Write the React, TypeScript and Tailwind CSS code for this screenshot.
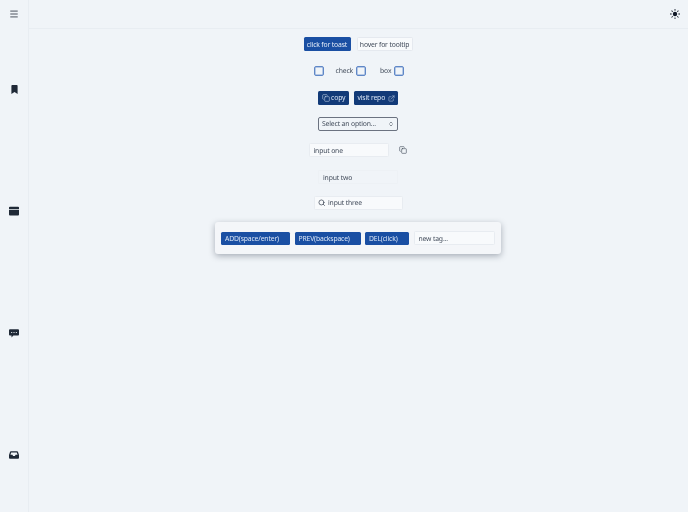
import { Menu, Copy, ExternalLink, Search, ChevronsUpDown } from 'lucide-react';

function Checkbox() {
  return <span className="block w-[8px] h-[8px] box-content border border-[#5f87c7] shadow-[inset_0_0_0_0.5px_#7d9ed4] rounded-[2px] bg-[#f0f4f8]" />;
}

function TagButton({ label, width }: { label: string; width: string }) {
  return (
    <button className={`h-[13px] box-content py-0 ${width} bg-[#1a4fa3] text-[#dbe6f6] leading-[13px] text-left pl-[4px] rounded-[1.5px]`}>
      {label}
    </button>
  );
}

function App() {
  return (
    <div className="w-[688px] h-[512px] overflow-hidden flex bg-[#f0f4f8] text-[#414b5a] text-[6.8px] tracking-[-0.15px] font-['Noto_Sans',sans-serif] [text-rendering:geometricPrecision] blur-[0.35px]">
      <aside className="w-[28px] box-content shrink-0 h-[512px] border-r border-[#e8edf2] flex flex-col">
        <div className="h-[28px] shrink-0 flex items-center justify-center">
          <Menu size={10} strokeWidth={1.75} className="text-[#111827]" />
        </div>
        <nav className="h-[488px] shrink-0 grid grid-rows-4 place-items-center text-[#1f2937]">
          <svg viewBox="0 0 16 16" className="w-[9px] h-[9px]" fill="currentColor">
            <path d="M2.5 1.5A1.5 1.5 0 0 1 4 0h8a1.5 1.5 0 0 1 1.5 1.5V16L8 12.5 2.5 16z" />
          </svg>
          <svg viewBox="0 0 16 16" className="w-[10px] h-[10px]" fill="currentColor">
            <path d="M1.500 1h13A1.500 1.500 0 0 1 16 2.500V5H0V2.500A1.500 1.500 0 0 1 1.500 1zM0 6.200h16v7.300a1.500 1.500 0 0 1-1.500 1.500h-13A1.500 1.500 0 0 1 0 13.500z" />
          </svg>
          <svg viewBox="0 0 16 16" className="w-[10px] h-[10px]" fill="currentColor">
            <path d="M1.5 2h13A1.5 1.5 0 0 1 16 3.5v7a1.5 1.5 0 0 1-1.5 1.5H7l-3 3v-3H1.5A1.5 1.5 0 0 1 0 10.500v-7A1.5 1.5 0 0 1 1.500 2z" />
            <path d="M3.500 6.200h1.600v1.600H3.500zM7.200 6.200h1.600v1.600H7.200zM10.900 6.200h1.600v1.600h-1.600z" fill="#f0f4f8" />
          </svg>
          <svg viewBox="0 0 16 16" className="w-[10px] h-[10px]" fill="currentColor">
            <path fillRule="evenodd" d="M3 2h10a1.500 1.500 0 0 1 1.400 1L16 8v4.500a1.500 1.500 0 0 1-1.500 1.500h-13A1.500 1.500 0 0 1 0 12.500V8l1.600-5A1.500 1.500 0 0 1 3 2zM2.300 7.500h3.200l1 2h3l1-2h3.200L12.500 4h-9z" />
          </svg>
        </nav>
      </aside>
      <div className="flex-1 min-w-0 flex flex-col">
        <header className="h-[29px] shrink-0 border-b border-[#e8edf2] flex items-center justify-end pr-[8px]">
          <svg viewBox="0 0 16 16" className="w-[10px] h-[10px] text-[#111827]" fill="currentColor">
            <circle cx="8" cy="8" r="3.500" />
            <path d="M7.300 0h1.400v2.600H7.300zM7.300 13.400h1.400V16H7.300zM0 7.300h2.600v1.400H0zM13.400 7.300H16v1.400h-2.600zM2 3l1-1 1.900 1.900-1 1zM11.100 12.100l1-1L14 13l-1 1zM2 13l1.900-1.900 1 1L3 14zM11.100 3.900 13 2l1 1-1.900 1.900z" />
          </svg>
        </header>
        <main className="flex flex-col items-center pt-[8px] pr-[1px]">
          <div className="h-[14px] flex items-center gap-[6px]">
            <button className="h-[14px] w-[47px] bg-[#1a4fa3] text-[#e4ecf8] leading-[15px] rounded-[1.500px]">click for toast</button>
            <button className="h-[14px] w-[56px] bg-[#f8fafc] border border-[#e5e9ef] leading-[13px] rounded-[1.500px]">hover for tooltip</button>
          </div>
          <div className="mt-[13px] h-[14px] flex items-center pl-[2px]">
            <Checkbox />
            <span className="ml-[12px] mr-[3px] leading-[14px]">check</span>
            <Checkbox />
            <span className="ml-[14px] mr-[3px] leading-[14px]">box</span>
            <Checkbox />
          </div>
          <div className="mt-[13px] h-[14px] flex items-center gap-[5px]">
            <button className="w-[31px] h-[14px] bg-[#123a78] text-[#dbe6f6] rounded-[1.500px] flex items-center justify-center gap-[1.500px]">
              <Copy size={8} strokeWidth={1.5} />copy
            </button>
            <button className="w-[44px] h-[14px] bg-[#123a78] text-[#dbe6f6] rounded-[1.500px] flex items-center justify-center gap-[2.500px]">
              visit repo<ExternalLink size={7} strokeWidth={1.500} />
            </button>
          </div>
          <div className="mt-[12px] w-[80px] h-[14px] border border-[#6b7280] rounded-[2px] flex items-center justify-between pl-[3px] pr-[3px]">
            <span className="pt-[1px]">Select an option...</span>
            <ChevronsUpDown size={6} strokeWidth={2} className="text-[#1f2937]" />
          </div>
          <div className="mt-[12px] h-[14px] flex items-center">
            <div className="w-[80px] h-[14px] bg-[#f8fafc] border border-[#e8ecf1] rounded-[1.500px] pl-[4px] leading-[13px]">input one</div>
            <Copy size={8} strokeWidth={1.75} className="ml-[10px] mr-[1px] text-[#374151]" />
          </div>
          <div className="mt-[13px] w-[80px] h-[14px] border border-[#edf1f5] rounded-[1.500px] pl-[4px] leading-[13px]">input two</div>
          <div className="mt-[12px] w-[89px] h-[14px] bg-[#f8fafc] border border-[#e8ecf1] rounded-[1.500px] flex items-center pl-[3px] gap-[3px]">
            <Search size={7.500} strokeWidth={2.250} className="text-[#374151]" />
            <span className="pt-[1px]">input three</span>
          </div>
          <div className="mt-[12px] w-[286px] h-[32px] bg-[#f4f6f9] rounded-[3px] shadow-[0_2px_6px_rgba(30,41,59,0.35)] flex items-center pl-[6px] gap-[4.500px]">
            <TagButton label="ADD(space/enter)" width="w-[65px]" />
            <TagButton label="PREV(backspace)" width="w-[62px]" />
            <TagButton label="DEL(click)" width="w-[40px]" />
            <div className="w-[81px] h-[14px] bg-[#f8fafc] border border-[#e8ecf1] rounded-[1.500px] pl-[4px] leading-[13px]">new tag...</div>
          </div>
        </main>
      </div>
    </div>
  );
}

export default App;
